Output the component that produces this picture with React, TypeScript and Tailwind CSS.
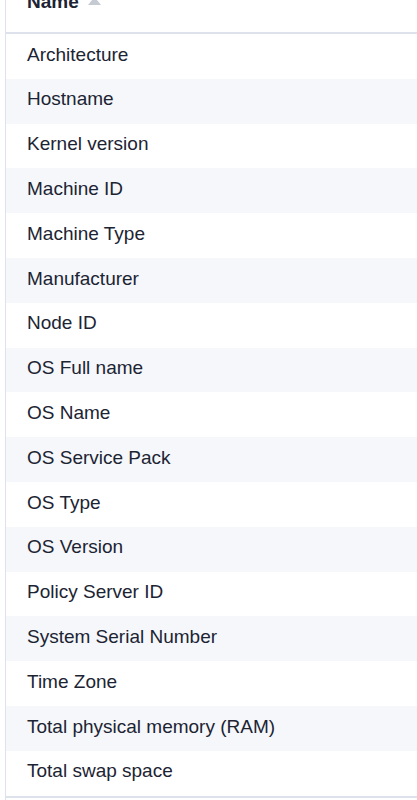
import React from "react";

const rows = [
  "Architecture",
  "Hostname",
  "Kernel version",
  "Machine ID",
  "Machine Type",
  "Manufacturer",
  "Node ID",
  "OS Full name",
  "OS Name",
  "OS Service Pack",
  "OS Type",
  "OS Version",
  "Policy Server ID",
  "System Serial Number",
  "Time Zone",
  "Total physical memory (RAM)",
  "Total swap space",
];

export default function App() {
  return (
    <div
      className="h-[800px] overflow-hidden bg-white"
      style={{ fontFamily: '"Liberation Sans", Arial, sans-serif' }}
    >
      <div className="ml-[5px] border-l border-[#dde2ec] -mt-[20px]">
        {/* Header */}
        <div className="h-[54px] flex items-center pl-[21px] pb-[8px] border-b-2 border-[#dde2ec]">
          <span className="text-[19px] font-bold text-[#1c2433]">Name</span>
          <svg
            className="ml-[8px] mb-[3px]"
            width="15"
            height="10"
            viewBox="0 0 15 10"
          >
            <path d="M7.5 1 L14 9 L1 9 Z" fill="#c5cad3" />
          </svg>
        </div>

        {/* Rows */}
        {rows.map((name, i) => (
          <div
            key={name}
            className={
              i % 2 === 1
                ? "h-[44.8px] flex items-center pl-[21px] pb-[3px] bg-[#f5f7fb]"
                : "h-[44.8px] flex items-center pl-[21px] pb-[3px] bg-white"
            }
          >
            <span className="text-[19px] text-[#1c2433]">{name}</span>
          </div>
        ))}
        <div className="border-t-2 border-[#dde2ec] h-[20px]" />
      </div>
    </div>
  );
}
